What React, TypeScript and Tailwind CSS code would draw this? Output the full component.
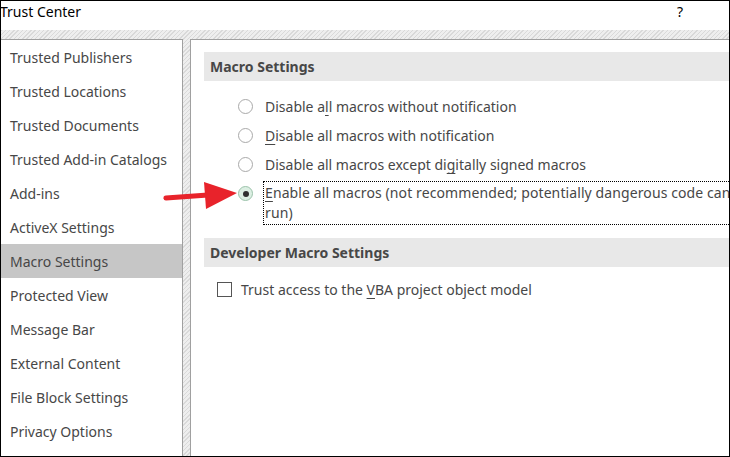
import React from 'react'

const navItems = [
  'Trusted Publishers',
  'Trusted Locations',
  'Trusted Documents',
  'Trusted Add-in Catalogs',
  'Add-ins',
  'ActiveX Settings',
  'Macro Settings',
  'Protected View',
  'Message Bar',
  'External Content',
  'File Block Settings',
  'Privacy Options',
]

function Radio({ checked }: { checked?: boolean }) {
  if (checked) {
    return (
      <span className="flex h-[15px] w-[15px] shrink-0 items-center justify-center rounded-full border border-[#9cc3ab] bg-[#dcefe3]">
        <span className="h-[6px] w-[6px] rounded-full bg-[#2f2f2f]" />
      </span>
    )
  }
  return <span className="h-[15px] w-[15px] shrink-0 rounded-full border border-[#a9a9a9] bg-white" />
}

function U({ children }: { children: React.ReactNode }) {
  return <span className="underline decoration-1 underline-offset-[3px]">{children}</span>
}

export default function App() {
  return (
    <div className="relative flex h-[457px] w-[730px] flex-col overflow-hidden border border-black bg-white font-['Noto_Sans',sans-serif] text-[14px] text-[#474747]">
      {/* title bar */}
      <div className="flex h-[29px] shrink-0 items-start justify-between pt-[1px] leading-[20px]">
        <span className="-ml-[1px] text-[14px] text-black">Trust Center</span>
        <span className="mr-[46px] text-[14px] text-black">?</span>
      </div>

      <div className="flex min-h-0 flex-1 bg-[repeating-linear-gradient(135deg,#d9d9d9_0px,#d9d9d9_1px,#eeeeee_1px,#eeeeee_3px)] pt-[9px]">
        {/* left nav */}
        <div className="w-[182px] shrink-0 border-r border-t border-[#a0a0a0] bg-white">
          {navItems.map((item) => (
            <div
              key={item}
              className={`flex h-[34px] items-center pl-[9px] ${item === 'Macro Settings' ? 'bg-[#c6c6c6]' : ''}`}
            >
              {item}
            </div>
          ))}
        </div>

        {/* right content */}
        <div className="ml-[7px] w-[560px] shrink-0 border-l border-t border-[#a0a0a0] bg-white pl-[13px] pt-[12px]">
          <div className="flex h-[29px] items-center bg-[#e8e8e8] pl-[6px] font-bold">Macro Settings</div>

          <div className="pl-[34px] pt-[11px]">
            <div className="flex h-[29px] items-center gap-[12px]">
              <Radio />
              <span className="whitespace-nowrap">Disable a<U>l</U>l macros without notification</span>
            </div>
            <div className="flex h-[29px] items-center gap-[12px]">
              <Radio />
              <span className="whitespace-nowrap"><U>D</U>isable all macros with notification</span>
            </div>
            <div className="flex h-[29px] items-center gap-[12px]">
              <Radio />
              <span className="whitespace-nowrap">Disable all macros except di<U>g</U>itally signed macros</span>
            </div>
            <div className="mt-[2px] flex items-start gap-[10px]">
              <div className="mt-[5px]">
                <Radio checked />
              </div>
              <div className="w-[480px] whitespace-nowrap border border-dotted border-black py-[1px] pl-[1px] leading-[20px] tracking-[0.1px]">
                <U>E</U>nable all macros (not recommended; potentially dangerous code can
                <br />
                run)
              </div>
            </div>
          </div>

          <div className="mt-[13px] flex h-[29px] items-center bg-[#e8e8e8] pl-[6px] font-bold">Developer Macro Settings</div>

          <div className="mt-[8px] flex h-[28px] items-center gap-[9px] pl-[13px]">
            <span className="h-[15px] w-[15px] shrink-0 border border-[#555] bg-white" />
            <span className="whitespace-nowrap">Trust access to the <U>V</U>BA project object model</span>
          </div>
        </div>
      </div>

      {/* red arrow overlay */}
      <svg className="absolute left-[155px] top-[176px]" width="90" height="40" viewBox="0 0 90 40">
        <line x1="10" y1="21" x2="52" y2="18" stroke="#e8232b" strokeWidth="5" strokeLinecap="round" />
        <polygon points="48,5 81,16 50,32" fill="#e8232b" />
      </svg>
    </div>
  )
}
